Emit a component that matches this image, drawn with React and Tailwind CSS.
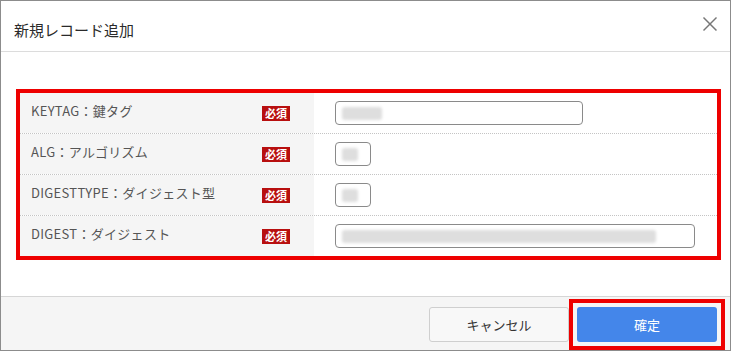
const rows = [
  { label: 'KEYTAG：鍵タグ', inputW: 'w-[248px]', blurW: 'w-[40px]' },
  { label: 'ALG：アルゴリズム', inputW: 'w-[36px]', blurW: 'w-[16px]' },
  { label: 'DIGESTTYPE：ダイジェスト型', inputW: 'w-[36px]', blurW: 'w-[16px]' },
  { label: 'DIGEST：ダイジェスト', inputW: 'w-[360px]', blurW: 'w-[314px]' },
];

function Field({ inputW, blurW }) {
  return (
    <div className={`${inputW} h-[24px] rounded-[4px] border border-[#8a8a8a] bg-white flex items-center px-[6px]`}>
      <div className={`${blurW} h-[13px] rounded-[3px] bg-[#dedede] blur-[1.5px]`} />
    </div>
  );
}

export default function App() {
  return (
    <div
      className="w-[731px] h-[351px] bg-white border border-[#8c8c8c] flex flex-col text-[#333]"
      style={{ fontFamily: '"Noto Sans CJK JP", "Liberation Sans", sans-serif' }}
    >
      {/* Header */}
      <div className="h-[51px] flex items-start justify-between pl-[13px] pr-[12px] border-b border-[#dcdcdc] shrink-0">
        <div className="pt-[20px] text-[15px] leading-[18px] text-[#2a2a2a]">新規レコード追加</div>
        <button className="mt-[15px] w-[16px] h-[16px] text-[#777]">
          <svg width="16" height="16" viewBox="0 0 16 16" fill="none" stroke="currentColor" strokeWidth="1.5">
            <line x1="1.5" y1="1.5" x2="14.5" y2="14.5" />
            <line x1="14.5" y1="1.5" x2="1.5" y2="14.5" />
          </svg>
        </button>
      </div>

      {/* Body */}
      <div className="flex-1 pl-[15px] pt-[37px]">
        <div className="w-[705px] border-[4px] border-[#ee0000]">
          {rows.map((row, i) => (
            <div
              key={row.label}
              className={`flex ${i === 3 ? 'h-[40px]' : 'h-[41px] border-b border-dotted border-[#c4c4c4]'}`}
            >
              <div className="w-[294px] bg-[#f5f5f5] flex items-center justify-between pl-[11px] pr-[24px]">
                <span className="text-[13px] leading-[16px] text-[#555] tracking-[0.3px] -mt-[5px]">{row.label}</span>
                <span className="bg-[#b80f0f] text-white text-[11px] leading-[15px] px-[3px] font-bold">必須</span>
              </div>
              <div className="flex-1 bg-white flex items-center pl-[21px]">
                <Field inputW={row.inputW} blurW={row.blurW} />
              </div>
            </div>
          ))}
        </div>
      </div>

      {/* Footer */}
      <div className="h-[54px] shrink-0 bg-[#f5f5f5] border-t border-[#d6d6d6] flex items-start justify-end pt-[2px] pr-[5px]">
        <button className="mt-[8px] w-[140px] h-[35px] rounded-[3px] border border-[#cfcfcf] bg-[#f8f8f8] text-[13px] text-[#333]">
          キャンセル
        </button>
        <div className="border-[4px] border-[#ee0000] p-[4px]">
          <button className="w-[140px] h-[35px] rounded-[3px] bg-[#4486ea] text-[13px] text-white">
            確定
          </button>
        </div>
      </div>
    </div>
  );
}
